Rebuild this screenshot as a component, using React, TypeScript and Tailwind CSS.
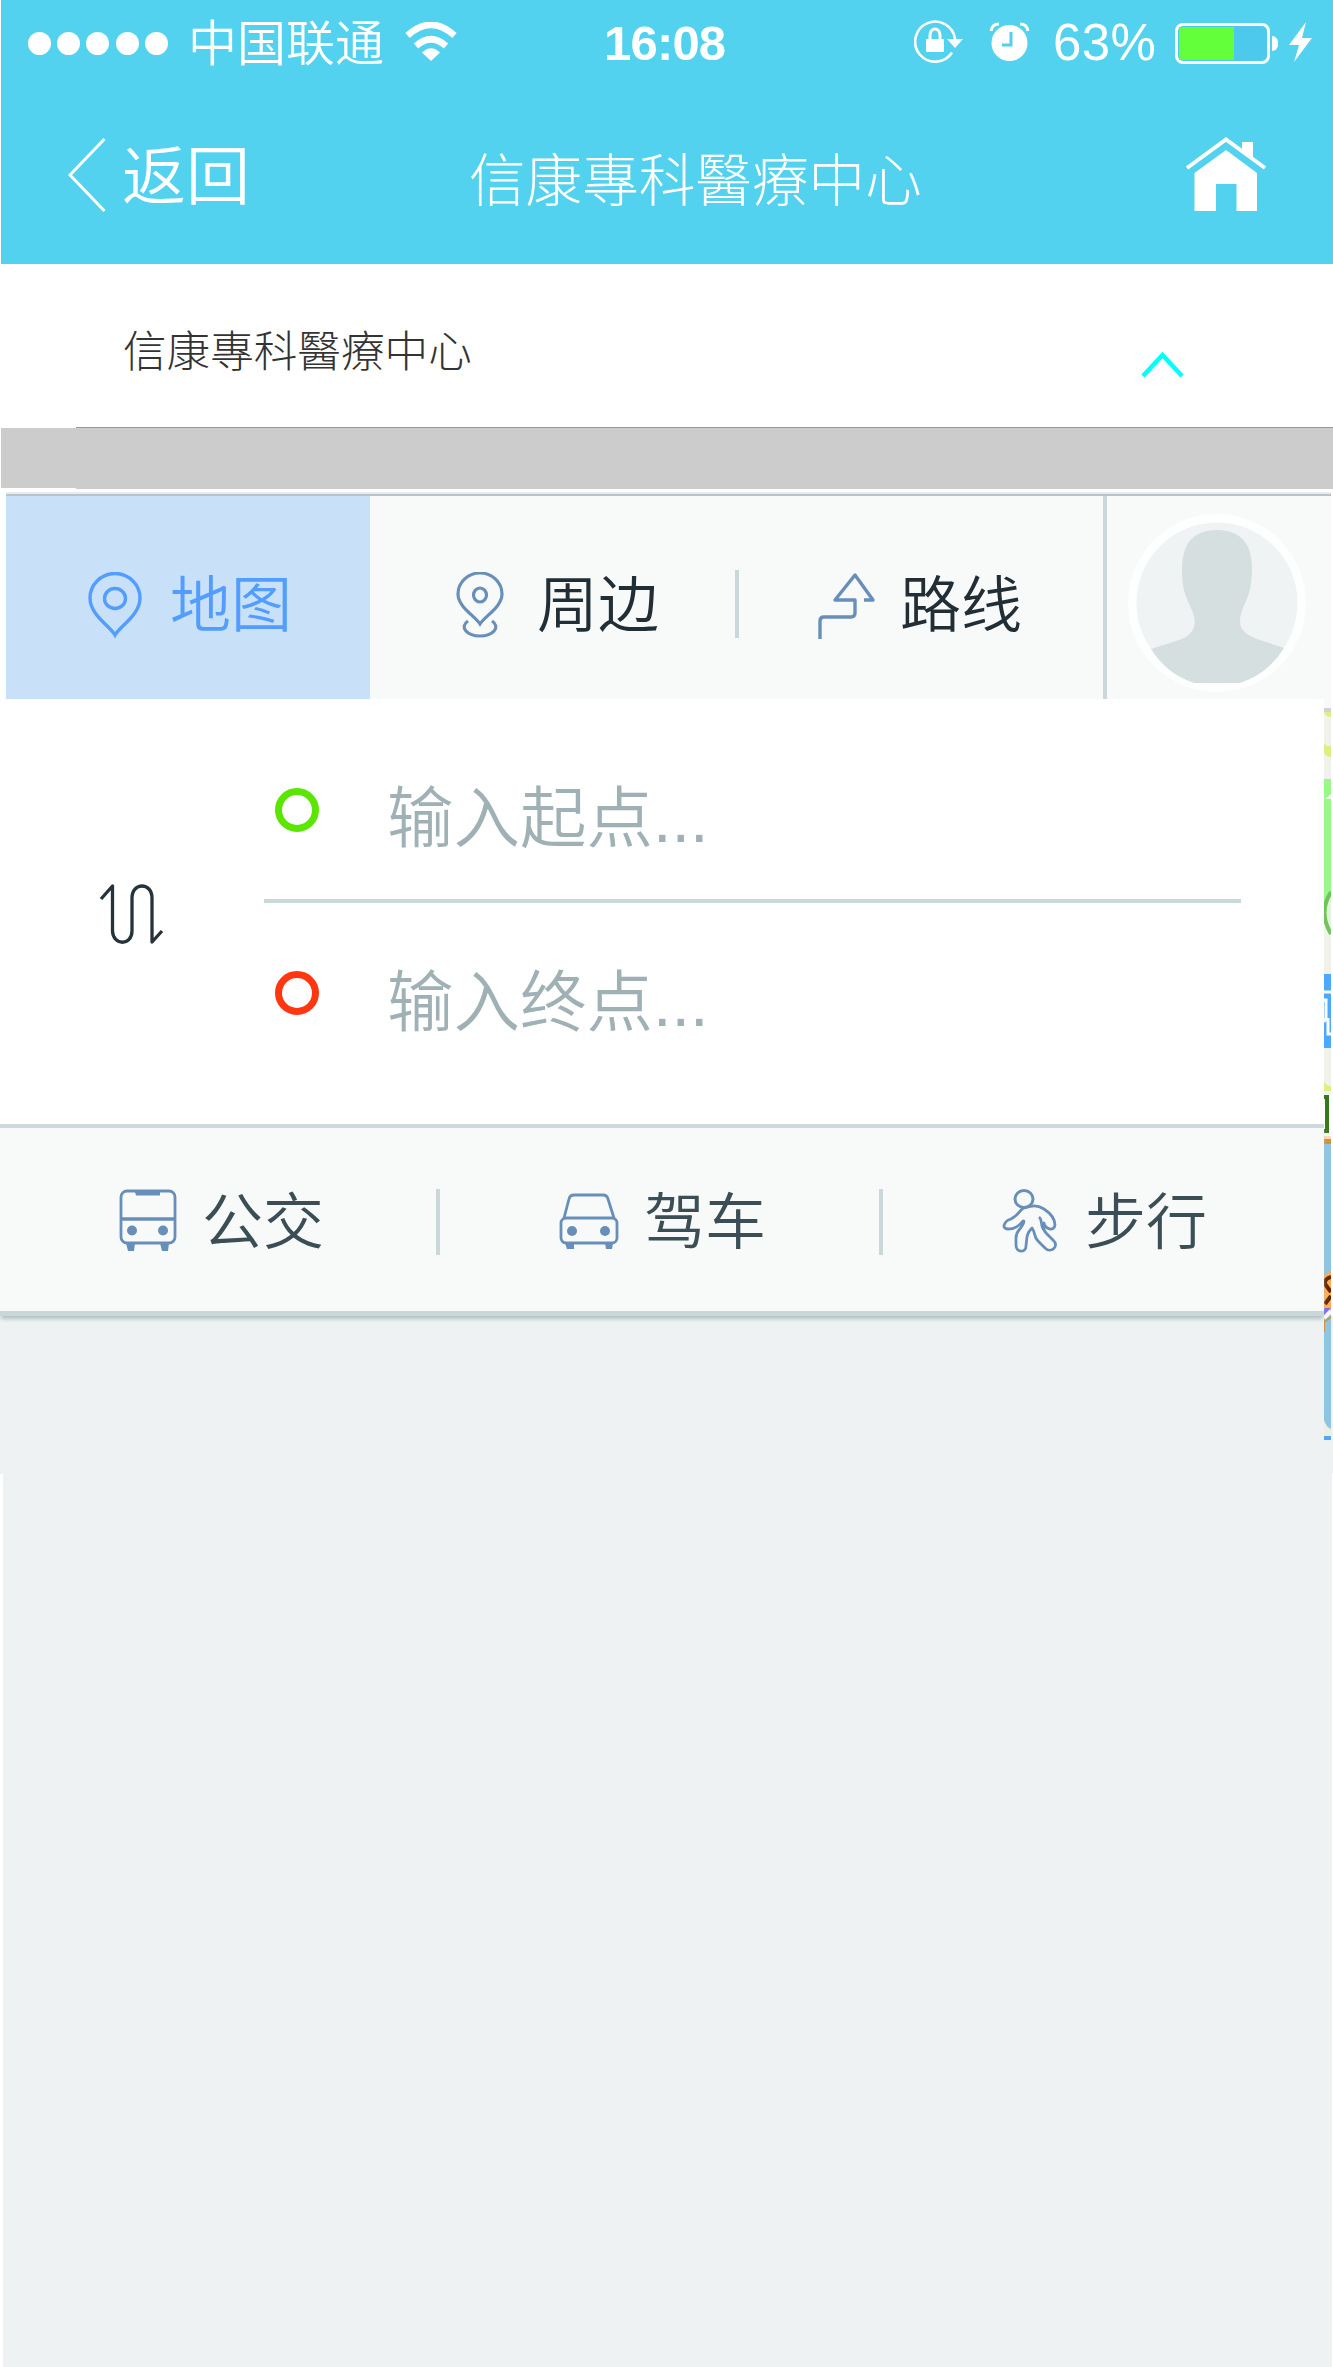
import type { ReactNode } from 'react';

function Glyph({ w, h, className = '', children }: { w: number; h: number; className?: string; children: ReactNode }) {
  return (
    <svg width={w} height={h} viewBox={`0 0 ${w} ${h}`} fill="none" className={`block shrink-0 ${className}`}>
      {children}
    </svg>
  );
}

function StatusBar() {
  return (
    <div className="flex h-[86px] items-center text-white">
      <div className="ml-[28px] flex w-[160px] gap-[6.2px]">
        {[0, 1, 2, 3, 4].map((i) => (
          <span key={i} className="size-[23px] shrink-0 rounded-full bg-white" />
        ))}
      </div>
      <div className="-mt-[6px] w-[217px] text-[49px] leading-[60px] font-[350]">中国联通</div>
      <Glyph w={52} h={40} className="-mt-[2px]">
        <path d="M2.500 13.500Q26-8 49.500 13.500" stroke="#fff" strokeWidth="6.500" />
        <path d="M11 24Q26 10.500 41 24" stroke="#fff" strokeWidth="6.500" />
        <path d="M17 30.500Q26 22 35 30.500L26 39z" fill="#fff" />
      </Glyph>
      <div className="ml-[147px] w-[310px] font-['Liberation_Sans'] text-[49px] leading-[60px] font-bold tracking-[-0.8px]">16:08</div>
      <Glyph w={50} h={44} className="-mt-[4px]">
        <path d="M38 33.500A20 20 0 1 1 41 20" stroke="#fff" strokeWidth="2.600" />
        <path d="M33 20H49L41 29z" fill="#fff" />
        <path d="M16 20V16a5 6 0 0 1 10 0v4" stroke="#fff" strokeWidth="3" />
        <rect x="12" y="20" width="18" height="13" rx="1" fill="#fff" />
      </Glyph>
      <Glyph w={42} h={40} className="-mt-[2px] ml-[25px]">
        <circle cx="20.500" cy="21" r="18" fill="#fff" />
        <path d="M2 9Q3 2 10 2M31 2Q38 2 39 9" stroke="#fff" strokeWidth="3" />
        <path d="M22 10V23H13" stroke="#52d1ee" strokeWidth="3" />
      </Glyph>
      <div className="ml-[22px] w-[122px] font-['Liberation_Sans'] text-[51px] leading-[60px] tracking-[0.4px]">63%</div>
      <div className="flex h-[41px] w-[95px] rounded-[8px] border-[3px] border-white bg-[#4ec9ee] p-[1px]">
        <div className="w-[55px] bg-[#62ff3a]" />
      </div>
      <div className="ml-[2px] h-[15px] w-[6px] rounded-r-full bg-white" />
      <Glyph w={24} h={42} className="-mt-[2px] ml-[11px]">
        <path d="M17 1L0 24H10L5 41L23 17H13z" fill="#fff" />
      </Glyph>
    </div>
  );
}

function NavBar() {
  return (
    <div className="flex h-[178px] text-white">
      <Glyph w={38} h={76} className="mt-[51px] ml-[68px]">
        <path d="M36.500 2L2 38L36.500 74" stroke="#fff" strokeWidth="3" />
      </Glyph>
      <div className="mt-[43px] ml-[16px] w-[347px] text-[64px] leading-[84px] font-[350]">返回</div>
      <div className="mt-[50px] w-[716px] text-[56.600px] leading-[80px] font-light whitespace-nowrap">信康專科醫療中心</div>
      <Glyph w={82} h={76} className="mt-[51px]">
        <path d="M2 31L41 2.500L80 31" stroke="#fff" strokeWidth="4" />
        <path d="M57 5H68V22L57 14z" fill="#fff" />
        <path d="M41 13L72 36V74H51.500V47H31V74H9.500V36z" fill="#fff" />
      </Glyph>
    </div>
  );
}

function HospitalRow() {
  return (
    <>
      <div className="flex h-[163px] bg-white">
        <div className="mt-[52px] ml-[123px] w-[1018px] text-[43.600px] leading-[64px] font-light text-[#333]">信康專科醫療中心</div>
        <Glyph w={43} h={27} className="mt-[87px]">
          <path d="M2 25L21.500 4L41 25" stroke="#00ffff" strokeWidth="4.500" />
        </Glyph>
      </div>
      <div className="ml-[76px] h-px bg-[#999]" />
      <div className="ml-px h-[60px] bg-[#ccc]" />
      <div className="ml-[76px] h-px bg-[#ccc]" />
      <div className="h-[3px] bg-white" />
    </>
  );
}

function Avatar() {
  return (
    <Glyph w={178} h={182} className="mt-[16px] ml-[21px]">
      <circle cx="89" cy="91" r="89" fill="#fdfefe" />
      <circle cx="89" cy="91" r="80.500" fill="#eff3f4" />
      <path
        d="M89 18C63 18 54 34 54 58C54 83 61 89 65 101C70 116 63 124 51 128L23 137A80.500 80.500 0 0 0 66 171H112A80.500 80.500 0 0 0 156 136L129 127C117 122 109 117 113 102C117 88 124 84 124 55C124 35 115 18 89 18z"
        fill="#d6dfe0"
      />
    </Glyph>
  );
}

function TabBar() {
  return (
    <div className="ml-[6px] w-[1325px]">
      <div className="h-[2px] bg-[#e8eced]" />
      <div className="h-[2px] bg-[#b6c5ca]" />
      <div className="flex h-[203px] bg-[#f8faf9] text-[61px] leading-[80px] font-[350]">
        <div className="flex w-[364px] bg-[#c8e1f8] text-[#529dff]">
          <Glyph w={54} h={67} className="mt-[76px] ml-[82px]">
            <path d="M27 63C22 54 2 43 2 26A25 24.500 0 0 1 52 26C52 43 32 54 27 63z" stroke="#529dff" strokeWidth="3.400" />
            <ellipse cx="27" cy="26.500" rx="10.500" ry="10" stroke="#529dff" strokeWidth="3.400" />
          </Glyph>
          <span className="mt-[65px] ml-[28px]">地图</span>
        </div>
        <div className="flex w-[365px] text-[#222e35]">
          <Glyph w={48} h={67} className="mt-[76px] ml-[86px]">
            <path d="M24 52C19 44 2 35 2 22A22 21 0 0 1 46 22C46 35 29 44 24 52z" stroke="#688fb9" strokeWidth="3.200" />
            <ellipse cx="24" cy="23" rx="6.500" ry="7" stroke="#688fb9" strokeWidth="3.200" />
            <path d="M12 49C3 55 11 64 24 64C37 64 45 55 36 49" stroke="#688fb9" strokeWidth="3.200" />
          </Glyph>
          <span className="mt-[65px] ml-[33px]">周边</span>
        </div>
        <div className="mt-[74px] h-[68px] w-[4px] bg-[#cbd8da]" />
        <div className="flex w-[364px] text-[#222e35]">
          <Glyph w={58} h={69} className="mt-[75px] ml-[79px]">
            <path d="M2 68V50Q2 46 6 46H33Q37 46 37 42V29H17L37 4L55 29H46" stroke="#688fb9" strokeWidth="3.400" strokeLinejoin="round" />
          </Glyph>
          <span className="mt-[65px] ml-[24px]">路线</span>
        </div>
        <div className="w-[4px] bg-[#cbd8da]" />
        <Avatar />
      </div>
    </div>
  );
}

function SearchPanel() {
  return (
    <div className="flex h-[425px] bg-white">
      <Glyph w={66} h={64} className="mt-[184px] ml-[99px]">
        <path
          d="M2 16L13.500 3V48C14 63 33 63 33 48V15C33-1 53-1 53 15V59L63 48"
          stroke="#26333a"
          strokeWidth="3.300"
          strokeLinejoin="round"
        />
      </Glyph>
      <div className="ml-[99px] w-[977px] text-[66.500px] leading-[90px] font-[350] text-[#9fb1b5]">
        <div className="flex h-[200px]">
          <span className="mt-[89px] ml-[11px] size-[44px] rounded-full border-[7px] border-[#5ae600]" />
          <span className="mt-[69px] ml-[68px]">
            输入起点<span className="font-['Liberation_Sans'] font-normal">...</span>
          </span>
        </div>
        <div className="h-[4px] bg-[#cbd8da]" />
        <div className="flex">
          <span className="mt-[68px] ml-[11px] size-[44px] rounded-full border-[7px] border-[#ff3710]" />
          <span className="mt-[49px] ml-[68px]">
            输入终点<span className="font-['Liberation_Sans'] font-normal">...</span>
          </span>
        </div>
      </div>
    </div>
  );
}

function TravelModes() {
  return (
    <div className="relative h-[192px] border-t-4 border-b-5 border-t-[#cddadb] border-b-[#c9d7d8] bg-[#f8faf9] shadow-[0_4px_4px_-1px_#afc0c2]">
      <div className="flex text-[61px] leading-[80px] font-[350] text-[#3b4e55]">
        <div className="flex w-[436px]">
          <Glyph w={58} h={64} className="mt-[61px] ml-[119px]">
            <rect x="2" y="2" width="54" height="52" rx="6" stroke="#688fb9" strokeWidth="2.800" />
            <path d="M2 30H56" stroke="#688fb9" strokeWidth="3.500" />
            <path d="M16 3H41V6.500H17z" fill="#688fb9" />
            <path d="M7 54H16L15 62H9zM41 54H50L49 62H43z" fill="#688fb9" />
            <circle cx="13" cy="41.500" r="5" fill="#688fb9" />
            <circle cx="44" cy="41.500" r="5" fill="#688fb9" />
          </Glyph>
          <span className="mt-[50px] ml-[25px]">公交</span>
        </div>
        <div className="mt-[61px] h-[66px] w-[4px] bg-[#cbd8da]" />
        <div className="flex w-[439px]">
          <Glyph w={60} h={60} className="mt-[64px] ml-[119px]">
            <path d="M5 26L10 7Q11 3 15 3H44Q48 3 49 7L55 26" stroke="#688fb9" strokeWidth="2.800" />
            <rect x="2" y="26" width="56" height="25" rx="5" stroke="#688fb9" strokeWidth="2.800" />
            <path d="M6 51H15V57H8zM46 51H54L53 57H47z" fill="#688fb9" />
            <circle cx="13" cy="39" r="5" fill="#688fb9" />
            <circle cx="46" cy="39" r="5" fill="#688fb9" />
          </Glyph>
          <span className="mt-[50px] ml-[25px]">驾车</span>
        </div>
        <div className="mt-[61px] h-[66px] w-[4px] bg-[#cbd8da]" />
        <div className="flex">
          <Glyph w={56} h={66} className="mt-[60px] ml-[119px]">
            <ellipse cx="22" cy="11" rx="9" ry="8.500" stroke="#688fb9" strokeWidth="3" />
            <path
              d="M22 20C17 22 18 26 9 31C2 33-1 41 6 41C12 41 17 38 20 34C23 31 22 35 20 38C17 43 14 43 14 50V57C14 65 24 65 24 58C25 50 24 46 30 40C34 45 31 48 36 53L43 60C49 66 58 58 51 52C44 45 40 43 42 35C43 41 52 44 53 37C53 30 48 25 42 21C34 16 29 18 22 20"
              stroke="#688fb9"
              strokeWidth="2.800"
              strokeLinejoin="round"
            />
            <path d="M37 29C41 32 38 38 42 42" stroke="#688fb9" strokeWidth="2.800" />
          </Glyph>
          <span className="mt-[50px] ml-[27px]">步行</span>
        </div>
      </div>
    </div>
  );
}

/* Edge of the map that shows beside the search sheet. */
function MapEdge() {
  return (
    <svg width="7" height="741" viewBox="0 699 7 741" fill="none" className="block shrink-0">
      <path d="M0 699h7v741H0z" fill="#f2f2ec" />
      <path d="M0 699h7v9H0z" fill="#f8faf9" />
      <path d="M0 708h7v4H0z" fill="#c8d6da" />
      <path d="M0 712h7v5q-5 0-7-5zM0 743l3 3h4v11q-5 0-7-4z" fill="#dfee84" />
      <path d="M0 779h7v118H0z" fill="#9af789" />
      <path d="M1 799q3-2 6-5v5z" fill="#f2f2ec" />
      <path d="M0 897h7v14H0z" fill="#9af789" />
      <path d="M0 911h7v24H0z" fill="#f2f2ec" />
      <path d="M7 892Q-6 912 7 934" fill="#e0f4da" stroke="#70c45c" strokeWidth="4" />
      <path d="M0 974h7v74H0z" fill="#4da9ff" />
      <path d="M0 992h7M0 1000h2v18l-2 4M4 1018v16h3" stroke="#fff" strokeWidth="3" />
      <path d="M0 1081q2 5 7 5v5H0z" fill="#dfee84" />
      <path d="M0 1094h7v42H0z" fill="#fff" />
      <path d="M0 1097h3v34H0" stroke="#36791b" strokeWidth="4" />
      <path d="M0 1136h7v3H0z" fill="#fadbb5" />
      <path d="M0 1139h7v5H0z" fill="#d29439" />
      <path d="M0 1144h7v292H0z" fill="#8cc6e3" />
      <path d="M0 1275l7-4v38H0z" fill="#ffad55" />
      <path d="M7 1277Q0 1279 1 1284L7 1292M7 1296L1 1304" stroke="#662700" strokeWidth="4" />
      <path d="M0 1308h7l-7 8z" fill="#806aee" />
      <path d="M0 1318l7-7" stroke="#fff" strokeWidth="4" />
      <path d="M0 1332v-10l7-5" stroke="#d29439" strokeWidth="2" />
      <path d="M0 1420q2 7 7 9v7H0z" fill="#eeeee2" />
      <path d="M0 1436h7v4H0z" fill="#4da9ff" />
    </svg>
  );
}

export default function App() {
  return (
    <div className="h-[2367px] w-[1333px] overflow-hidden bg-white font-['Noto_Sans_CJK_SC',sans-serif] whitespace-nowrap">
      <header className="ml-px bg-[#52d2ee]">
        <div className="-ml-px">
          <StatusBar />
          <NavBar />
        </div>
      </header>
      <HospitalRow />
      <TabBar />
      <div className="flex h-[775px] bg-[linear-gradient(to_bottom,#fff_617px,#eef2f3_617px)]">
        <div className="w-[1324px] shrink-0">
          <SearchPanel />
          <TravelModes />
        </div>
        <MapEdge />
      </div>
      <div className="mr-px ml-[3px] h-[893px] bg-[#eef2f3]" />
    </div>
  );
}
